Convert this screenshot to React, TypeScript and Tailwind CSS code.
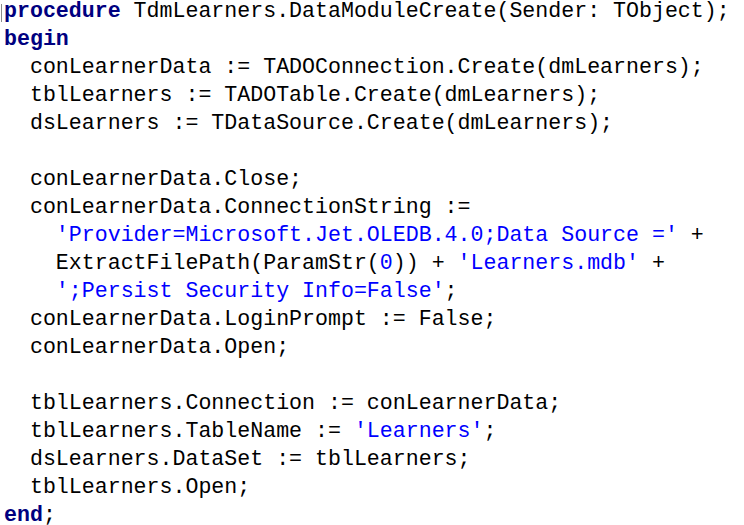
import React from 'react';

type Seg = { t: string; k?: 'kw' | 'str' };

const lines: Seg[][] = [
  [{ t: 'procedure', k: 'kw' }, { t: ' TdmLearners.DataModuleCreate(Sender: TObject);' }],
  [{ t: 'begin', k: 'kw' }],
  [{ t: '  conLearnerData := TADOConnection.Create(dmLearners);' }],
  [{ t: '  tblLearners := TADOTable.Create(dmLearners);' }],
  [{ t: '  dsLearners := TDataSource.Create(dmLearners);' }],
  [],
  [{ t: '  conLearnerData.Close;' }],
  [{ t: '  conLearnerData.ConnectionString :=' }],
  [{ t: '    ' }, { t: "'Provider=Microsoft.Jet.OLEDB.4.0;Data Source ='", k: 'str' }, { t: ' +' }],
  [{ t: '    ExtractFilePath(ParamStr(' }, { t: '0', k: 'str' }, { t: ')) + ' }, { t: "'Learners.mdb'", k: 'str' }, { t: ' +' }],
  [{ t: '    ' }, { t: "';Persist Security Info=False'", k: 'str' }, { t: ';' }],
  [{ t: '  conLearnerData.LoginPrompt := False;' }],
  [{ t: '  conLearnerData.Open;' }],
  [],
  [{ t: '  tblLearners.Connection := conLearnerData;' }],
  [{ t: '  tblLearners.TableName := ' }, { t: "'Learners'", k: 'str' }, { t: ';' }],
  [{ t: '  dsLearners.DataSet := tblLearners;' }],
  [{ t: '  tblLearners.Open;' }],
  [{ t: 'end', k: 'kw' }, { t: ';' }],
];

const segClass = (k?: Seg['k']) => {
  if (k === 'kw') return 'font-bold text-[#000080]';
  if (k === 'str') return 'text-[#0000ff]';
  return 'text-black';
};

export default function App() {
  return (
    <div className="w-[744px] h-[525px] bg-white overflow-hidden relative">
      {/* caret */}
      <div className="absolute left-[1px] top-[4px] w-px h-[18px] bg-[#8a8a8a]" />
      <pre
        className="pl-1 -mt-[3px] m-0 text-[21.6px] leading-[28px] whitespace-pre"
        style={{ fontFamily: '"Liberation Mono", "DejaVu Sans Mono", monospace' }}
      >
        {lines.map((segs, i) => (
          <div key={i} className="h-[28px]">
            {segs.map((s, j) => (
              <span key={j} className={segClass(s.k)}>
                {s.t}
              </span>
            ))}
          </div>
        ))}
      </pre>
    </div>
  );
}
